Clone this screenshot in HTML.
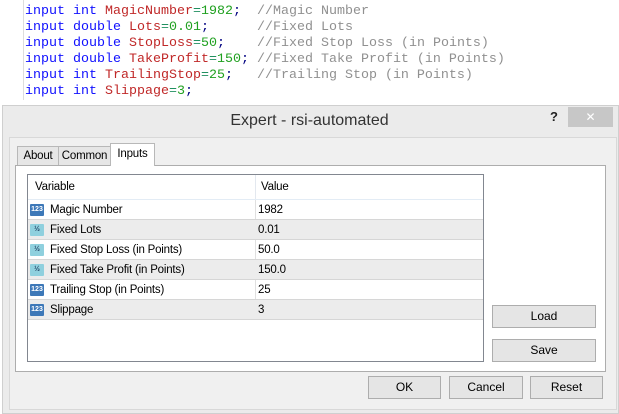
<!DOCTYPE html>
<html><head><style>
body{margin:0;width:619px;height:414px;overflow:hidden;background:#fff;position:relative;font-family:"Liberation Sans",sans-serif;}
.code{position:absolute;left:25px;top:4px;font-family:"Liberation Mono",monospace;font-size:13.33px;line-height:16px;white-space:pre;color:#000080}
.k{color:#1010ff}.v{color:#c02828}.n{color:#20a020}.c{color:#909090}.o{color:#209060}
.gut{position:absolute;left:23px;top:0;width:1px;height:100px;background:#ddd}
.a{position:absolute;box-sizing:border-box}
.frame{left:2px;top:105px;width:617px;height:309px;background:#ebebeb;border:1px solid #cfcfcf}
.client{left:9px;top:137px;width:608px;height:273px;background:#f0f0f0;border:1px solid #d8d8d8}
.title{left:0;width:619px;top:112px;text-align:center;font-size:16px;color:#333}
.x{left:568px;top:107px;width:45px;height:20px;background:#c7c7c7;color:#fff;text-align:center;font-size:12px;line-height:20px}
.q{left:550px;top:109px;font-size:13px;font-weight:bold;color:#222}
.tab{top:146px;height:20px;background:#e6e6e6;border:1px solid #b8b8b8;font-size:11.5px;line-height:19px;text-align:center;color:#000;letter-spacing:-0.2px}
.page{left:15px;top:165px;width:591px;height:207px;background:#fff;border:1px solid #adadad}
.list{left:27px;top:174px;width:457px;height:188px;background:#fff;border:1px solid #828790}
.row{left:28px;width:455px;height:20px;font-size:11.5px;line-height:20px;border-bottom:1px solid #d6d6d6;letter-spacing:-0.2px}
.row span{position:absolute}
.g{background:#ececec}
.btn{height:23px;background:#e5e5e5;border:1px solid #adadad;font-size:12px;line-height:21px;text-align:center;color:#000}
.ic{position:absolute;left:2px;top:4px;width:14px;height:12px;border-radius:1px;font-size:7px;line-height:12px;color:#fff;text-align:center;font-weight:bold;letter-spacing:0}
.i{background:#3d78b8}.d{background:#8fd0de;color:#246}
</style></head><body>
<div class="gut"></div>
<div class="code"><span class="k">input int</span> <span class="v">MagicNumber</span><span class="o">=</span><span class="n">1982</span>;  <span class="c">//Magic Number</span>
<span class="k">input double</span> <span class="v">Lots</span><span class="o">=</span><span class="n">0.01</span>;      <span class="c">//Fixed Lots</span>
<span class="k">input double</span> <span class="v">StopLoss</span><span class="o">=</span><span class="n">50</span>;    <span class="c">//Fixed Stop Loss (in Points)</span>
<span class="k">input double</span> <span class="v">TakeProfit</span><span class="o">=</span><span class="n">150</span>; <span class="c">//Fixed Take Profit (in Points)</span>
<span class="k">input int</span> <span class="v">TrailingStop</span><span class="o">=</span><span class="n">25</span>;   <span class="c">//Trailing Stop (in Points)</span>
<span class="k">input int</span> <span class="v">Slippage</span><span class="o">=</span><span class="n">3</span>;</div>
<div class="a frame"></div>
<div class="a title">Expert - rsi-automated</div>
<div class="a q">?</div>
<div class="a x">✕</div>
<div class="a client"></div>
<div class="a tab" style="left:17px;width:42px">About</div>
<div class="a tab" style="left:58px;width:53px">Common</div>
<div class="a page"></div>
<div class="a tab" style="left:110px;width:45px;top:143px;height:23px;background:#fff;border-bottom:none;line-height:20px">Inputs</div>
<div class="a list"></div>
<div class="a row" style="top:175px;height:25px;line-height:24px;border-bottom:1px solid #e3ecf5"><span style="left:7px">Variable</span><span style="left:233px">Value</span></div>
<div class="a" style="left:255px;top:175px;width:1px;height:24px;background:#e3e8ef"></div>
<div class="a" style="left:255px;top:200px;width:1px;height:120px;background:#e0e0e0"></div>
<div class="a row" style="top:200px"><div class="ic i">123</div><span style="left:22px">Magic Number</span><span style="left:230px">1982</span></div>
<div class="a row g" style="top:220px"><div class="ic d">½</div><span style="left:22px">Fixed Lots</span><span style="left:230px">0.01</span></div>
<div class="a row" style="top:240px"><div class="ic d">½</div><span style="left:22px">Fixed Stop Loss (in Points)</span><span style="left:230px">50.0</span></div>
<div class="a row g" style="top:260px"><div class="ic d">½</div><span style="left:22px">Fixed Take Profit (in Points)</span><span style="left:230px">150.0</span></div>
<div class="a row" style="top:280px"><div class="ic i">123</div><span style="left:22px">Trailing Stop (in Points)</span><span style="left:230px">25</span></div>
<div class="a row g" style="top:300px"><div class="ic i">123</div><span style="left:22px">Slippage</span><span style="left:230px">3</span></div>
<div class="a btn" style="left:492px;top:305px;width:104px">Load</div>
<div class="a btn" style="left:492px;top:339px;width:104px">Save</div>
<div class="a btn" style="left:368px;top:376px;width:73px">OK</div>
<div class="a btn" style="left:449px;top:376px;width:74px">Cancel</div>
<div class="a btn" style="left:530px;top:376px;width:73px">Reset</div>
</body></html>
